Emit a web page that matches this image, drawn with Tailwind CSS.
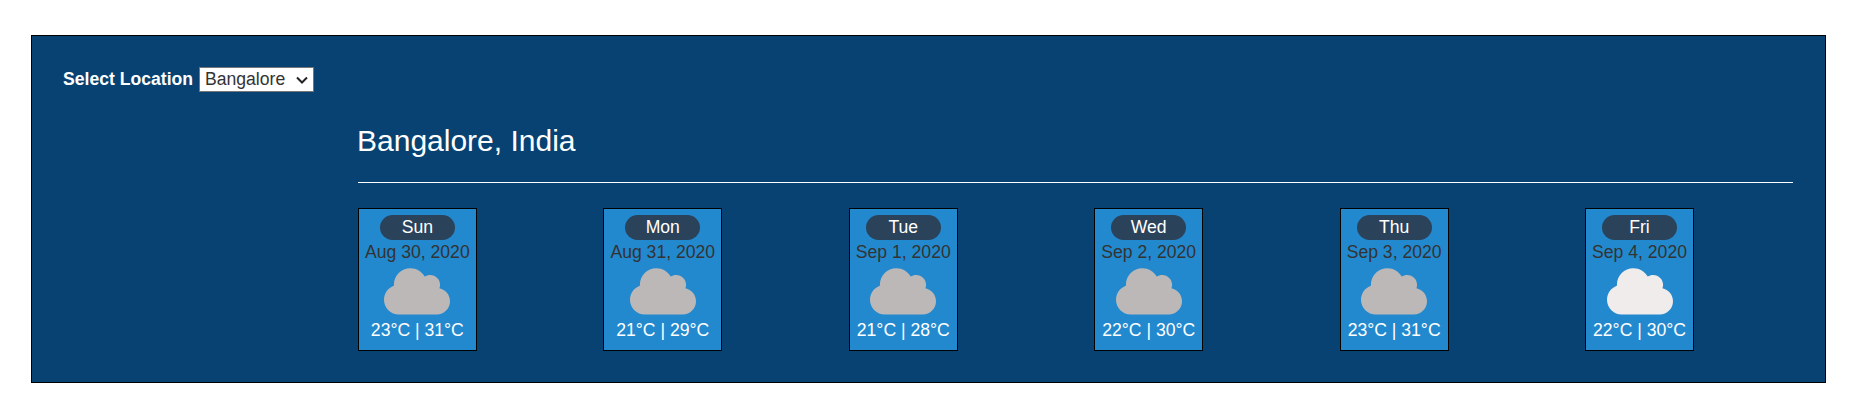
<!DOCTYPE html>
<html lang="en">
<head>
<meta charset="utf-8">
<title>Weather</title>
<script src="https://cdn.jsdelivr.net/npm/@tailwindcss/browser@4"></script>
</head>
<body class="bg-white font-['Liberation_Sans',Arial,sans-serif] text-[17.6px] leading-[25px] text-[#333]">
<svg class="hidden"><symbol id="cloud" viewBox="0 0 640 512"><path d="M537.6 226.6c4.1-10.7 6.4-22.4 6.4-34.6 0-53-43-96-96-96-19.7 0-38.1 6-53.3 16.2C367 64.2 315.3 32 256 32c-88.4 0-160 71.6-160 160 0 2.7.1 5.4.2 8.1C40.2 219.8 0 273.2 0 336c0 79.5 64.5 144 144 144h368c70.7 0 128-57.3 128-128 0-61.9-44-113.6-102.4-125.4z"/></symbol></svg>
<main class="mt-[35px] ml-[31px] h-[348px] w-[1795px] border border-black bg-[#084272] pt-[31px] pr-8 pl-[31px]">
  <div class="flex h-[25px] items-center text-white">
    <label class="w-[136px] font-bold whitespace-nowrap">Select Location</label>
    <div class="flex h-[25px] w-[115px] items-center justify-between border border-[#767676] bg-white pr-[5px] pl-[5px] text-[#333]">
      <span>Bangalore</span>
      <svg class="h-3 w-3" viewBox="0 0 12 12" fill="none" stroke="#222" stroke-width="2"><path d="M1 3.5 6 8.5 11 3.5"/></svg>
    </div>
  </div>
  <section class="ml-[295px]">
    <h1 class="mt-7 -ml-px h-[62px] text-[30px] leading-[42px] text-white">Bangalore, India</h1>
    <hr class="border-t border-white">
    <div class="mt-[25px] grid grid-cols-6 gap-x-[37.5px]">
      <article class="flex h-[143px] flex-col items-center justify-self-start border border-black bg-[#2289cf] px-1.5 pt-1.5 whitespace-nowrap">
        <div class="h-[25px] w-[75px] rounded-[13px] bg-[#2b425b] text-center text-white">Sun</div><div>Aug 30, 2020</div>
        <svg class="h-[52.8px] w-[66px] fill-[#bcb8b8]"><use href="#cloud"/></svg><div class="text-white">23°C | 31°C</div>
      </article>
      <article class="flex h-[143px] flex-col items-center justify-self-start border border-black bg-[#2289cf] px-1.5 pt-1.5 whitespace-nowrap">
        <div class="h-[25px] w-[75px] rounded-[13px] bg-[#2b425b] text-center text-white">Mon</div><div>Aug 31, 2020</div>
        <svg class="h-[52.8px] w-[66px] fill-[#bcb8b8]"><use href="#cloud"/></svg><div class="text-white">21°C | 29°C</div>
      </article>
      <article class="flex h-[143px] flex-col items-center justify-self-start border border-black bg-[#2289cf] px-1.5 pt-1.5 whitespace-nowrap">
        <div class="h-[25px] w-[75px] rounded-[13px] bg-[#2b425b] text-center text-white">Tue</div><div>Sep 1, 2020</div>
        <svg class="h-[52.8px] w-[66px] fill-[#bcb8b8]"><use href="#cloud"/></svg><div class="text-white">21°C | 28°C</div>
      </article>
      <article class="flex h-[143px] flex-col items-center justify-self-start border border-black bg-[#2289cf] px-1.5 pt-1.5 whitespace-nowrap">
        <div class="h-[25px] w-[75px] rounded-[13px] bg-[#2b425b] text-center text-white">Wed</div><div>Sep 2, 2020</div>
        <svg class="h-[52.8px] w-[66px] fill-[#bcb8b8]"><use href="#cloud"/></svg><div class="text-white">22°C | 30°C</div>
      </article>
      <article class="flex h-[143px] flex-col items-center justify-self-start border border-black bg-[#2289cf] px-1.5 pt-1.5 whitespace-nowrap">
        <div class="h-[25px] w-[75px] rounded-[13px] bg-[#2b425b] text-center text-white">Thu</div><div>Sep 3, 2020</div>
        <svg class="h-[52.8px] w-[66px] fill-[#bcb8b8]"><use href="#cloud"/></svg><div class="text-white">23°C | 31°C</div>
      </article>
      <article class="flex h-[143px] flex-col items-center justify-self-start border border-black bg-[#2289cf] px-1.5 pt-1.5 whitespace-nowrap">
        <div class="h-[25px] w-[75px] rounded-[13px] bg-[#2b425b] text-center text-white">Fri</div><div>Sep 4, 2020</div>
        <svg class="h-[52.8px] w-[66px] fill-[#f0ecec]"><use href="#cloud"/></svg><div class="text-white">22°C | 30°C</div>
      </article>
    </div>
  </section>
</main>
</body>
</html>
